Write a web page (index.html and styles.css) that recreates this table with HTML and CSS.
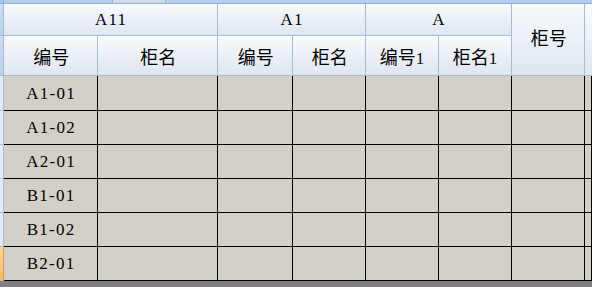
FILE: index.html
```html
<!DOCTYPE html>
<html lang="zh">
<head>
<meta charset="utf-8">
<title>柜号表</title>
<link rel="stylesheet" href="styles.css">
</head>
<body>
<div class="sheet">
  <div class="topstrip">
    <div class="ts ts-corner"></div>
    <div class="ts ts-a"></div>
    <div class="ts ts-b"></div>
    <div class="ts ts-c"></div>
  </div>
  <div class="grid">
    <div class="rh rh-head"></div>
    <div class="h span-a11"><span class="lbl">A11</span></div>
    <div class="h span-a1"><span class="lbl">A1</span></div>
    <div class="h span-a"><span class="lbl">A</span></div>
    <div class="h span-gh"><span class="lbl"><span class="cjk">柜号</span></span></div>
    <div class="h span-rest"></div>

    <div class="rh rh-head"></div>
    <div class="h"><span class="lbl"><span class="cjk">编号</span></span></div>
    <div class="h"><span class="lbl"><span class="cjk">柜名</span></span></div>
    <div class="h"><span class="lbl"><span class="cjk">编号</span></span></div>
    <div class="h"><span class="lbl"><span class="cjk">柜名</span></span></div>
    <div class="h"><span class="lbl"><span class="cjk">编号</span>1</span></div>
    <div class="h"><span class="lbl"><span class="cjk">柜名</span>1</span></div>

    <div class="rh first"></div><div class="d id first">A1-01</div><div class="d first"></div><div class="d first"></div><div class="d first"></div><div class="d first"></div><div class="d first"></div><div class="d first"></div><div class="d first"></div>
    <div class="rh"></div><div class="d id">A1-02</div><div class="d"></div><div class="d"></div><div class="d"></div><div class="d"></div><div class="d"></div><div class="d"></div><div class="d"></div>
    <div class="rh"></div><div class="d id">A2-01</div><div class="d"></div><div class="d"></div><div class="d"></div><div class="d"></div><div class="d"></div><div class="d"></div><div class="d"></div>
    <div class="rh"></div><div class="d id">B1-01</div><div class="d"></div><div class="d"></div><div class="d"></div><div class="d"></div><div class="d"></div><div class="d"></div><div class="d"></div>
    <div class="rh"></div><div class="d id">B1-02</div><div class="d"></div><div class="d"></div><div class="d"></div><div class="d"></div><div class="d"></div><div class="d"></div><div class="d"></div>
    <div class="rh sel"></div><div class="d id">B2-01</div><div class="d"></div><div class="d"></div><div class="d"></div><div class="d"></div><div class="d"></div><div class="d"></div><div class="d"></div>
  </div>
</div>
</body>
</html>
```
FILE: styles.css
```css
html, body {
  margin: 0;
  padding: 0;
}
body {
  width: 592px;
  height: 287px;
  overflow: hidden;
  background: #808080;
  font-family: "Liberation Serif", "Noto Sans CJK SC", serif;
  font-size: 17px;
  color: #000;
}
.sheet {
  width: 592px;
  background: #d4d0c8;
}
.topstrip {
  display: flex;
  height: 4px;
}
.ts {
  box-sizing: border-box;
  height: 4px;
  border-bottom: 1px solid #8fb0df;
  border-right: 1px solid #8fb0df;
  background: #b6cdee;
}
.ts-corner { width: 4px; background: #a9c3ea; }
.ts-a { width: 109px; }
.ts-b { width: 53px; background: #d3dbe6; border-right-color: #9fb3cf; }
.ts-c { flex: 1; border-right: none; }

.grid {
  display: grid;
  grid-template-columns: 4px 94px 120px 75px 73px 73px 73px 73px 1fr;
  grid-template-rows: 32px 40px 35px 34px 34px 34px 34px 34px;
}
.grid > div {
  box-sizing: border-box;
  min-width: 0;
}
.h {
  display: flex;
  align-items: center;
  justify-content: center;
  background: linear-gradient(#f8fafd, #dfe6f1);
  border-right: 1px solid #a6bbd4;
  border-bottom: 1px solid #a6bbd4;
  white-space: nowrap;
}
.lbl {
  letter-spacing: 1.3px;
  padding-left: 1.3px;
}
.cjk {
  font-family: "Noto Sans CJK SC", sans-serif;
  font-size: 18px;
  letter-spacing: 0;
}
.span-a11 { grid-column: 2 / 4; }
.span-a1 { grid-column: 4 / 6; }
.span-a { grid-column: 6 / 8; }
.span-gh { grid-column: 8 / 9; grid-row: 1 / 3; padding-bottom: 5px; }
.span-rest { grid-column: 9 / 10; grid-row: 1 / 3; border-right: none; }

.rh {
  background: #e3ebf6;
  border-right: 1px solid #a6bbd4;
  border-bottom: 1px solid #a6bbd4;
}
.rh-head {
  background: linear-gradient(#cddcf1, #bcd0ec);
}
.rh.sel {
  background: linear-gradient(#fbd79b, #f5bc68);
  border-right-color: #e09b3c;
}
.d {
  background: #d4d0c8;
  border-right: 1px solid #000;
  border-bottom: 1px solid #000;
}
.d.id {
  display: flex;
  align-items: center;
  justify-content: center;
  letter-spacing: 1.3px;
  padding-left: 1.3px;
}
.d.first.id { padding-top: 1px; }
```
